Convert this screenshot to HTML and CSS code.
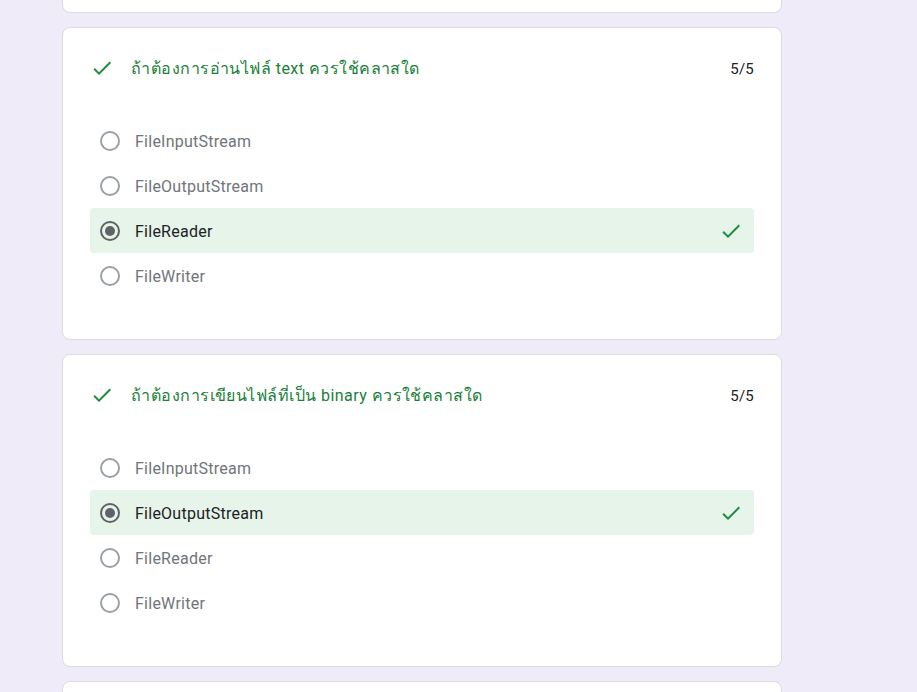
FILE: index.html
```html
<!DOCTYPE html>
<html lang="th">
<head>
<meta charset="utf-8">
<title>Quiz results</title>
<link rel="stylesheet" href="styles.css">
</head>
<body>
<main class="column">
  <section class="card card-cut"></section>

  <section class="card">
    <div class="q-head">
      <svg class="q-check" viewBox="0 0 24 24" width="24" height="24"><path d="M9 16.17L4.83 12l-1.42 1.41L9 19 21 7l-1.41-1.41z"/></svg>
      <div class="q-title">ถ้าต้องการอ่านไฟล์ text ควรใช้คลาสใด</div>
      <div class="q-score">5/5</div>
    </div>
    <div class="options">
      <div class="opt"><span class="radio"></span><span class="opt-text">FileInputStream</span></div>
      <div class="opt"><span class="radio"></span><span class="opt-text">FileOutputStream</span></div>
      <div class="opt opt-correct"><span class="radio radio-on"></span><span class="opt-text">FileReader</span>
        <svg class="opt-check" viewBox="0 0 24 24" width="24" height="24"><path d="M9 16.17L4.83 12l-1.42 1.41L9 19 21 7l-1.41-1.41z"/></svg></div>
      <div class="opt"><span class="radio"></span><span class="opt-text">FileWriter</span></div>
    </div>
  </section>

  <section class="card">
    <div class="q-head">
      <svg class="q-check" viewBox="0 0 24 24" width="24" height="24"><path d="M9 16.17L4.83 12l-1.42 1.41L9 19 21 7l-1.41-1.41z"/></svg>
      <div class="q-title">ถ้าต้องการเขียนไฟล์ที่เป็น binary ควรใช้คลาสใด</div>
      <div class="q-score">5/5</div>
    </div>
    <div class="options">
      <div class="opt"><span class="radio"></span><span class="opt-text">FileInputStream</span></div>
      <div class="opt opt-correct"><span class="radio radio-on"></span><span class="opt-text">FileOutputStream</span>
        <svg class="opt-check" viewBox="0 0 24 24" width="24" height="24"><path d="M9 16.17L4.83 12l-1.42 1.41L9 19 21 7l-1.41-1.41z"/></svg></div>
      <div class="opt"><span class="radio"></span><span class="opt-text">FileReader</span></div>
      <div class="opt"><span class="radio"></span><span class="opt-text">FileWriter</span></div>
    </div>
  </section>

  <section class="card card-next"></section>
</main>
</body>
</html>
```
FILE: styles.css
```css
html, body {
  margin: 0;
  padding: 0;
  background: #f0ebf8;
  height: 692px;
  overflow: hidden;
  font-family: Roboto, sans-serif;
}

.column {
  width: 720px;
  margin-left: 62px;
  display: flex;
  flex-direction: column;
  gap: 14px;
}

.card {
  box-sizing: border-box;
  background: #fff;
  border: 1px solid #dadce0;
  border-radius: 8px;
  padding: 24px 27px 41px 27px;
}

.card-cut {
  height: 13px;
  padding: 0;
  border-top: none;
  border-radius: 0 0 8px 8px;
}

.card-next {
  height: 40px;
  padding: 0;
}

.q-head {
  height: 32px;
  display: flex;
  align-items: center;
}

.q-check {
  flex: none;
  fill: #1e8e3e;
  margin-right: 17px;
}

.q-title {
  flex: 1;
  color: #188038;
  font-size: 16px;
  letter-spacing: 0.45px;
}

.q-score {
  color: #202124;
  font-size: 15px;
  letter-spacing: 0.2px;
  padding-top: 2px;
}

.options {
  margin-top: 34px;
  display: flex;
  flex-direction: column;
}

.opt {
  height: 45px;
  display: flex;
  align-items: center;
  padding: 0 11px 0 10px;
  border-radius: 4px;
}

.opt-correct {
  background: #e6f4ea;
}

.radio {
  box-sizing: border-box;
  flex: none;
  width: 20px;
  height: 20px;
  border: 2px solid #9aa0a6;
  border-radius: 50%;
  margin-right: 15px;
  position: relative;
}

.radio-on {
  border-color: #5f6368;
}

.radio-on::after {
  content: "";
  position: absolute;
  left: 3px;
  top: 3px;
  width: 10px;
  height: 10px;
  border-radius: 50%;
  background: #5f6368;
}

.opt-text {
  flex: 1;
  font-size: 16px;
  letter-spacing: 0.25px;
  color: #70757a;
  padding-top: 1px;
}

.opt-correct .opt-text {
  color: #202124;
}

.opt-check {
  flex: none;
  fill: #1e8e3e;
}
```
